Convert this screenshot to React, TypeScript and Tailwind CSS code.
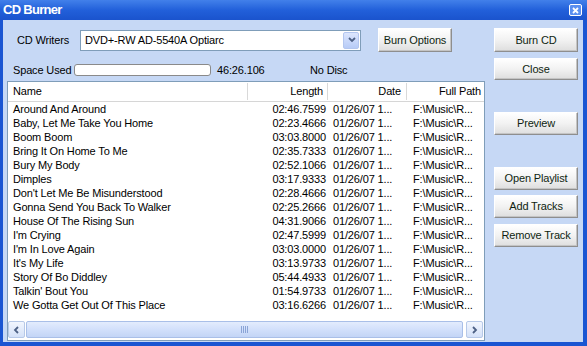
import type { ReactNode } from 'react';

const TRACKS: [string, string][] = [
  ['Around And Around', '02:46.7599'],
  ['Baby, Let Me Take You Home', '02:23.4666'],
  ['Boom Boom', '03:03.8000'],
  ['Bring It On Home To Me', '02:35.7333'],
  ['Bury My Body', '02:52.1066'],
  ['Dimples', '03:17.9333'],
  ["Don't Let Me Be Misunderstood", '02:28.4666'],
  ['Gonna Send You Back To Walker', '02:25.2666'],
  ['House Of The Rising Sun', '04:31.9066'],
  ["I'm Crying", '02:47.5999'],
  ["I'm In Love Again", '03:03.0000'],
  ["It's My Life", '03:13.9733'],
  ['Story Of Bo Diddley', '05:44.4933'],
  ["Talkin' Bout You", '01:54.9733'],
  ['We Gotta Get Out Of This Place', '03:16.6266'],
];

function XpButton({ children, className }: { children: ReactNode; className: string }) {
  return (
    <button
      className={`flex items-center justify-center border border-t-white border-l-white border-r-[#8e8e8e] border-b-[#8e8e8e] bg-gradient-to-b from-[#ffffff] via-[#f2f2f2] to-[#dedede] shadow-[inset_-1px_-1px_0_#c4c4c4] text-[11px] text-[#0f1f10] ${className}`}
    >
      {children}
    </button>
  );
}

function Chevron({ dir }: { dir: 'left' | 'right' | 'down' }) {
  const pts = dir === 'left' ? '6,2 3,5 6,8' : dir === 'right' ? '3,2 6,5 3,8' : '2,3 5,6 8,3';
  return (
    <svg width="9" height="10" viewBox="0 0 9 10">
      <polyline points={pts} fill="none" stroke="#4d6185" strokeWidth="1.8" />
    </svg>
  );
}

export default function App() {
  return (
    <div className="w-[587px] h-[346px] flex flex-col bg-[#1a55d2] font-['Liberation_Sans',Arial,sans-serif] text-black select-none">
      {/* title bar */}
      <div className="h-[20px] flex items-center justify-between pl-[3px] pr-[5px] bg-gradient-to-b from-[#4280ea] via-[#2260da] to-[#1a53cd]">
        <span className="text-white font-bold text-[13px] tracking-[-0.7px]">CD Burner</span>
        <div className="w-[13px] h-[12px] border border-white rounded-[2px] bg-[#5a8ff0] flex items-center justify-center">
          <svg width="7" height="7" viewBox="0 0 7 7">
            <path d="M1 1 L6 6 M6 1 L1 6" stroke="white" strokeWidth="1.8" />
          </svg>
        </div>
      </div>

      <div className="flex-1 ml-[3px] mr-[4px] mb-[4px] bg-[#c6d8f5] flex text-[11px] tracking-[-0.15px]">
        {/* left side */}
        <div className="ml-[4px] w-[478px] flex flex-col">
          <div className="mt-[8px] h-[24px] flex items-center">
            <span className="ml-[10px] w-[63px]">CD Writers</span>
            <div className="w-[281px] h-[21px] bg-white border border-[#7f9db9] flex items-center justify-between">
              <span className="ml-[4px]">DVD+-RW AD-5540A Optiarc</span>
              <div className="w-[16px] h-[17px] mr-[1px] rounded-[2px] border border-[#b3c6ef] bg-gradient-to-b from-[#dce6fd] to-[#b7cbf7] flex items-center justify-center">
                <Chevron dir="down" />
              </div>
            </div>
            <XpButton className="ml-[17px] w-[74px] h-[24px]">Burn Options</XpButton>
          </div>

          <div className="mt-[12px] h-[12px] flex items-center">
            <span className="ml-[6px] w-[61px] whitespace-nowrap">Space Used</span>
            <div className="w-[137px] h-[12px] bg-white border border-[#8a8a8a] rounded-[3px]" />
            <span className="ml-[6px] w-[93px]">46:26.106</span>
            <span>No Disc</span>
          </div>

          {/* track list */}
          <div className="mt-[5px] h-[260px] bg-white border border-[#7f9db9] flex flex-col">
            <div className="h-[20px] border-b border-[#d6d6d6] grid grid-cols-[240px_80px_79px_77px] items-center">
              <div className="pl-[5px] h-[17px] flex items-center border-r border-[#d9d9d9]">Name</div>
              <div className="pr-[4px] h-[17px] flex items-center justify-end border-r border-[#d9d9d9]">Length</div>
              <div className="pr-[5px] h-[17px] flex items-center justify-end border-r border-[#d9d9d9]">Date</div>
              <div className="pr-[3px] h-[17px] flex items-center justify-end">Full Path</div>
            </div>
            {TRACKS.map(([name, len]) => (
              <div key={name} className="h-[14px] leading-[14px] grid grid-cols-[240px_80px_79px_77px] whitespace-nowrap">
                <div className="pl-[5px]">{name}</div>
                <div className="pr-[2px] text-right">{len}</div>
                <div className="pl-[5px]">01/26/07 1...</div>
                <div className="pl-[6px]">F:\Music\R...</div>
              </div>
            ))}
            <div className="flex-1" />
            {/* horizontal scrollbar */}
            <div className="h-[17px] mb-[2px] flex">
              <div className="w-[17px] h-[17px] border border-[#b7c9e8] rounded-[2px] bg-gradient-to-b from-[#f2f6fe] to-[#d4e1f8] flex items-center justify-center">
                <Chevron dir="left" />
              </div>
              <div className="flex-1 ml-[1px] mr-[3px] rounded-[2px] border border-[#a9bfe8] bg-gradient-to-b from-[#e3ecfd] via-[#d2e0fb] to-[#c3d5f6] flex items-center justify-center">
                <svg width="8" height="7" viewBox="0 0 8 7">
                  <path d="M0.5 0 V7 M2.5 0 V7 M4.5 0 V7 M6.5 0 V7" stroke="#8aa4d6" strokeWidth="1" />
                </svg>
              </div>
              <div className="w-[17px] h-[17px] mr-[1px] border border-[#b7c9e8] rounded-[2px] bg-gradient-to-b from-[#f2f6fe] to-[#d4e1f8] flex items-center justify-center">
                <Chevron dir="right" />
              </div>
            </div>
          </div>
        </div>

        {/* right buttons */}
        <div className="ml-[9px] w-[84px] flex flex-col">
          <XpButton className="mt-[8px] h-[24px]">Burn CD</XpButton>
          <XpButton className="mt-[6px] h-[22px]">Close</XpButton>
          <XpButton className="mt-[32px] h-[23px]">Preview</XpButton>
          <XpButton className="mt-[32px] h-[23px]">Open Playlist</XpButton>
          <XpButton className="mt-[5px] h-[23px]">Add Tracks</XpButton>
          <XpButton className="mt-[6px] h-[23px]">Remove Track</XpButton>
        </div>
      </div>
    </div>
  );
}
